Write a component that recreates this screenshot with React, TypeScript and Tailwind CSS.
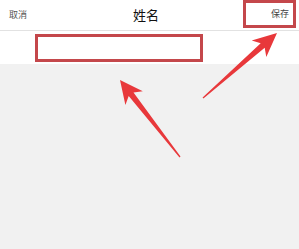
import React from 'react';

const font = { fontFamily: '"Noto Sans CJK SC", "Noto Sans", sans-serif' };

function Arrows() {
  return (
    <svg className="absolute inset-0 pointer-events-none" width="299" height="249" viewBox="0 0 299 249">
      <polygon
        fill="#e8383b"
        points="120,80 142.8,91.3 133.5,92.4 180.5,156.6 179.5,157.4 128.7,96 125.4,104.9"
      />
      <polygon
        fill="#e8383b"
        points="277,33 266.3,57.1 264.7,47.8 203.4,98.5 202.6,97.5 260.7,43.2 251.7,40.5"
      />
    </svg>
  );
}

export default function App() {
  return (
    <div className="relative w-[299px] h-[249px] bg-[#f1f1f1] overflow-hidden" style={font}>
      <div className="h-[31px] bg-white border-b border-[#e2e2e2] flex items-center justify-between pl-[9px] pr-[3px]">
        <span className="text-[9px] text-[#555]">取消</span>
        <span className="text-[13px] text-[#111] ml-[22px]">姓名</span>
        <div className="w-[53px] h-[28px] -mt-[3px] border-[3px] border-[#c4474b] flex items-center justify-end pr-[4px]">
          <span className="text-[9px] text-[#444]">保存</span>
        </div>
      </div>
      <div className="h-[33px] bg-white flex items-center pl-[35px]">
        <div className="w-[168px] h-[28px] border-[3px] border-[#c4474b]" />
      </div>
      <Arrows />
    </div>
  );
}
